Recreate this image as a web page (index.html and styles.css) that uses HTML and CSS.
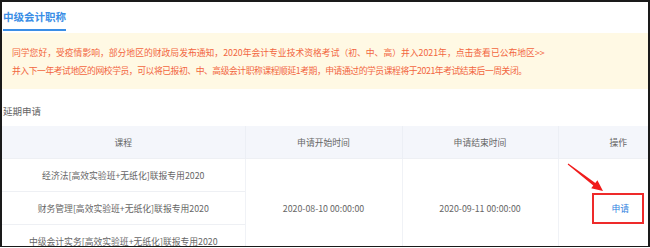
FILE: index.html
```html
<!DOCTYPE html>
<html lang="zh-CN">
<head>
  <meta charset="UTF-8" />
  <title>中级会计职称</title>
  <link rel="stylesheet" href="styles.css">
</head>
<body>
  <div class="frame">
    <!-- Tab title -->
    <div class="tabs">
      <span class="tab active">中级会计职称</span>
    </div>

    <!-- Notice -->
    <div class="notice">
      <p>同学您好，受疫情影响，部分地区的财政局发布通知，2020年会计专业技术资格考试（初、中、高）并入2021年，点击查看已公布地区&gt;&gt;</p>
      <p class="tight">并入下一年考试地区的网校学员，可以将已报初、中、高级会计职称课程顺延1考期，申请通过的学员课程将于2021年考试结束后一周关闭。</p>
    </div>

    <h3 class="section-title">延期申请</h3>

    <table class="apply-table">
      <colgroup>
        <col class="col-course">
        <col class="col-start">
        <col class="col-end">
        <col class="col-op">
      </colgroup>
      <thead>
        <tr>
          <th>课程</th>
          <th>申请开始时间</th>
          <th>申请结束时间</th>
          <th>操作</th>
        </tr>
      </thead>
      <tbody>
        <tr>
          <td>经济法[高效实验班+无纸化]联报专用2020</td>
          <td rowspan="3" class="merged">2020-08-10 00:00:00</td>
          <td rowspan="3" class="merged">2020-09-11 00:00:00</td>
          <td rowspan="3" class="merged"><a class="apply-link" href="#">申请</a></td>
        </tr>
        <tr>
          <td>财务管理[高效实验班+无纸化]联报专用2020</td>
        </tr>
        <tr>
          <td>中级会计实务[高效实验班+无纸化]联报专用2020</td>
        </tr>
      </tbody>
    </table>

    <!-- annotation arrow -->
    <svg class="arrow" width="50" height="40" viewBox="0 0 50 40">
      <polygon points="8.3,5.6 35.3,25 37.4,22.3 43,33 31.2,30.3 33.3,27.6 7.7,6.4" fill="#f01c1c" />
    </svg>
  </div>
</body>
</html>
```

FILE: styles.css
```css
body {
  margin: 0;
  font-family: "Noto Sans CJK SC", "Liberation Sans", sans-serif;
  background-color: #fff;
}

.frame {
  position: relative;
  width: 650px;
  height: 247px;
  box-sizing: border-box;
  border: 2px solid #1a1a1a;
  border-bottom-width: 1px;
  overflow: hidden;
}

.tabs {
  height: 22px;
  padding-left: 1px;
}

.tab {
  display: inline-block;
  height: 20px;
  line-height: 15px;
  font-size: 10.5px;
  font-weight: bold;
  color: #3a8ee6;
  border-bottom: 2px solid #3a8ee6;
}

.notice {
  margin-top: 9px;
  padding: 11px 10px 9px;
  background-color: #fff9e4;
}

.notice p {
  margin: 0;
  font-size: 8.8px;
  line-height: 18px;
  color: #f2663f;
  white-space: nowrap;
}

.notice p.tight {
  letter-spacing: -0.45px;
}

.section-title {
  margin: 13px 0 0;
  padding-left: 1px;
  font-size: 9.5px;
  font-weight: normal;
  line-height: 18px;
  color: #666;
}

.apply-table {
  margin-top: 6px;
  width: 676px;
  table-layout: fixed;
  border-collapse: collapse;
  font-size: 8.8px;
  color: #666;
}

.col-course { width: 243px; }
.col-start { width: 157px; }
.col-end { width: 156px; }
.col-op { width: 120px; }

.apply-table th {
  height: 32px;
  padding: 0;
  font-weight: normal;
  background-color: #f4f6fb;
  border-left: 1px solid #eceff5;
}

.apply-table td {
  height: 32px;
  padding: 0;
  text-align: center;
  border-top: 1px solid #eef0f4;
  border-left: 1px solid #f0f2f6;
}

.apply-table th:first-child,
.apply-table td:first-child {
  border-left: none;
}

.apply-table td.merged {
  vertical-align: middle;
}

.apply-link {
  display: inline-block;
  box-sizing: border-box;
  width: 52px;
  height: 31px;
  padding-left: 4px;
  line-height: 27px;
  color: #2f7fe0;
  text-decoration: none;
  border: 2px solid #ee2a2a;
}

.arrow {
  position: absolute;
  left: 558px;
  top: 156px;
}
```
